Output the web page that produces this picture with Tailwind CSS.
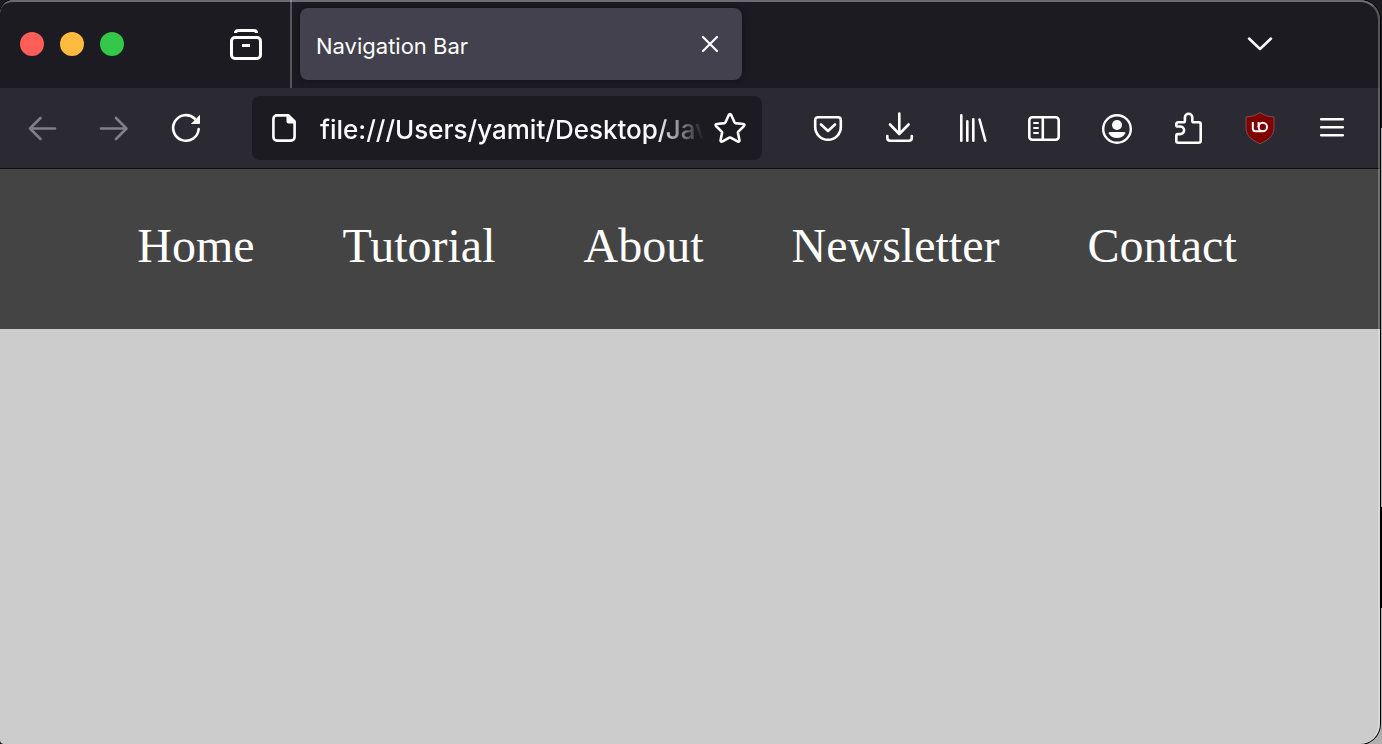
<!DOCTYPE html>
<html lang="en">
<head>
<meta charset="utf-8">
<title>Navigation Bar</title>
<script src="https://cdn.jsdelivr.net/npm/@tailwindcss/browser@4"></script>
</head>
<body class="relative min-h-screen flex bg-[#1c1b22] overflow-hidden">
  <!-- desktop showing beside the window -->
  <div class="absolute inset-y-0 right-0 w-6 flex flex-col bg-[#1c1b22]" aria-hidden="true">
    <div class="h-32 bg-[#1c1b22]"></div>
    <div class="h-[379px] bg-[#b0b0b0]"></div>
    <div class="h-[101px] bg-black"></div>
    <div class="flex-1 bg-[#b0b0b0]"></div>
  </div>

  <div class="relative flex-1 flex flex-col mr-[2px] rounded-[20px] rounded-tl-[14px] rounded-bl-[4px] overflow-hidden bg-[#cccccc] shadow-[0_0_0_1px_#000]">
    <div class="flex items-stretch h-[88px] bg-[#1c1b22] text-white">
      <div class="flex items-center gap-4 pl-5">
        <button aria-label="Close window" class="size-6 rounded-full bg-[#ff5f58]"></button>
        <button aria-label="Minimise window" class="size-6 rounded-full bg-[#ffbb3f]"></button>
        <button aria-label="Zoom window" class="size-6 rounded-full bg-[#34c84a]"></button>
      </div>
      <button aria-label="Recent browsing" class="ml-[102px] pr-6 border-r-2 border-[#56555b]">
        <svg class="size-10" viewBox="0 0 40 40" fill="none" stroke="#fff" stroke-width="3" stroke-linecap="butt">
          <rect x="5.500" y="13.500" width="29" height="21" rx="3.500"/>
          <path d="M9.500 9c0-2 1-2.500 3-2.500h15c2 0 3 .5 3 2.500"/>
          <path d="M16 21.500h8"/>
        </svg>
      </button>
      <div class="flex items-center my-2 ml-2 w-[442px] pl-4 pr-3 rounded-lg bg-[#42414d] shadow-[0_0_6px_#00000080]">
        <span class="flex-1 pt-1 font-['Inter'] text-[22px] leading-7">Navigation Bar</span>
        <button aria-label="Close tab">
          <svg class="size-10" viewBox="0 0 40 40" fill="none" stroke="#fbfbfe" stroke-width="2.200" stroke-linecap="round"><path d="M13 13l14 14M27 13L13 27"/></svg>
        </button>
      </div>
      <button aria-label="List all tabs" class="ml-auto mr-25">
        <svg class="size-10" viewBox="0 0 40 40" fill="none" stroke="#fff" stroke-width="2.500" stroke-linecap="round" stroke-linejoin="round"><path d="M9 14.500l11 10.500 11-10.500"/></svg>
      </button>
    </div>

    <div class="flex items-center h-[81px] pl-[6px] pr-3 bg-[#2b2a33] border-b border-[#0c0c0d]">
      <button aria-label="Back" class="w-[72px] shrink-0 flex justify-center" disabled>
        <svg class="size-10" viewBox="0 0 40 40" fill="none" stroke="#807f85" stroke-width="2.600" stroke-linecap="round" stroke-linejoin="round"><path d="M33 20.500H8M18.500 10L8 20.500 18.500 31"/></svg>
      </button>
      <button aria-label="Forward" class="w-[72px] shrink-0 flex justify-center" disabled>
        <svg class="size-10" viewBox="0 0 40 40" fill="none" stroke="#807f85" stroke-width="2.600" stroke-linecap="round" stroke-linejoin="round"><path d="M7 20.500h25M22 10l10.500 10.500L22 31"/></svg>
      </button>
      <button aria-label="Reload" class="w-[72px] shrink-0 flex justify-center">
        <svg class="size-10" viewBox="0 0 40 40" fill="none" stroke="#fff" stroke-width="2.600" stroke-linecap="round"><path d="M32.700 21A12.800 12.800 0 1 1 28.800 10.700"/><path d="M34 6.800v8.200q0 1-1 1h-8.200z" fill="#fff" stroke="none"/></svg>
      </button>

      <div class="flex items-center flex-1 min-w-0 h-16 mx-[30px] px-3 rounded-lg bg-[#1c1b22]">
        <svg class="size-10 shrink-0" viewBox="0 0 40 40" fill="none" stroke="#fff" stroke-width="2.600" stroke-linejoin="round"><path d="M12 7.400h12.500l6.100 6.100V29a3.600 3.600 0 0 1-3.600 3.600H13A3.600 3.600 0 0 1 9.400 29V11A3.600 3.600 0 0 1 13 7.400z"/><path d="M22.500 6.500v7q0 2 2 2h7z" fill="#fff" stroke="none"/></svg>
        <input aria-label="Address" type="text" value="file:///Users/yamit/Desktop/JavaScript" class="flex-1 w-0 min-w-0 ml-4 mr-1 pt-[2px] h-10 bg-transparent text-[#fbfbfe] font-['Inter'] font-medium text-[26px] outline-none [mask-image:linear-gradient(to_right,#000_336px,transparent_384px)]">
        <button aria-label="Bookmark this page" class="shrink-0">
          <svg class="size-10" viewBox="0 0 40 40" fill="none" stroke="#fff" stroke-width="2.600" stroke-linejoin="round"><path d="M18.700 7.200q1.300-2.400 2.600 0l3.200 7.100q.3.700 1 .8l7.500.9q2.500.4.800 2.300l-5.500 5.300q-.5.500-.4 1.200l1.500 7.100q.3 2.600-2 1.500l-6.700-3.700q-.7-.4-1.400 0l-6.700 3.700q-2.300 1.100-2-1.500l1.500-7.100q.1-.7-.4-1.200l-5.500-5.300q-1.700-1.900.8-2.300l7.500-.9q.7-.1 1-.8z"/></svg>
        </button>
      </div>

      <button aria-label="Save to Pocket" class="w-[72px] shrink-0 flex justify-center">
        <svg class="size-10" viewBox="0 0 40 40" fill="none" stroke="#fff" stroke-width="2.600" stroke-linecap="round" stroke-linejoin="round"><path d="M10 9.200h20a2.800 2.800 0 0 1 2.800 2.800v7a12.800 12.800 0 0 1-25.600 0v-7A2.800 2.800 0 0 1 10 9.200z"/><path d="M13 16.500l7 6.500 7-6.500"/></svg>
      </button>
      <button aria-label="Downloads" class="w-[72px] shrink-0 flex justify-center">
        <svg class="size-10" viewBox="0 0 40 40" fill="none" stroke="#fff" stroke-width="2.600" stroke-linecap="round" stroke-linejoin="round"><path d="M19.300 5.500v20M10 16.500l9.300 9.500 9.300-9.500M7.300 28v1.800q0 3 3 3h18.500q3 0 3-3V28"/></svg>
      </button>
      <button aria-label="Library" class="w-[72px] shrink-0 flex justify-center">
        <svg class="size-10" viewBox="0 0 40 40" fill="none" stroke="#fff" stroke-width="2.600" stroke-linecap="round"><path d="M9.300 7.300v25.400M15.300 13.300v19.400M21.300 11.300v21.400M27.500 11.500l5.800 21.200"/></svg>
      </button>
      <button aria-label="Sidebars" class="w-[72px] shrink-0 flex justify-center">
        <svg class="size-10" viewBox="0 0 40 40" fill="none" stroke="#fff" stroke-width="2.600" stroke-linecap="round"><rect x="5.300" y="9.300" width="29.400" height="22.400" rx="3"/><path d="M18.800 9.500v22"/><path d="M10 15h4M10 20h4M10 25h4" stroke-width="2"/></svg>
      </button>
      <button aria-label="Account" class="w-[72px] shrink-0 flex justify-center">
        <svg class="size-10" viewBox="0 0 40 40" fill="#fff"><circle cx="21" cy="21" r="13.800" fill="none" stroke="#fff" stroke-width="2.400"/><circle cx="21" cy="17" r="5"/><path d="M14 24h14q2 0 1.300 1.500-2.800 4.500-8.300 4.500t-8.300-4.500Q12 24 14 24z"/></svg>
      </button>
      <button aria-label="Extensions" class="w-[72px] shrink-0 flex justify-center">
        <svg class="size-10" viewBox="0 0 40 40" fill="none" stroke="#fff" stroke-width="2.600" stroke-linejoin="round"><path d="M10.100 14.300h5.200q1.600 0 1.600-1.600V9.500a3.700 3.700 0 0 1 7.400 0v3.200q0 1.600 1.600 1.600h4.800q2 0 2 2v16.400q0 2-2 2H10.300q-2 0-2-2v-5q0-1.600 1.600-1.600h2.400a3.800 3.800 0 0 0 0-7.600H9.900q-1.600 0-1.600-1.600v-.4q0-2.200 1.800-2.200z"/></svg>
      </button>
      <button aria-label="uBlock Origin" class="w-[72px] shrink-0 flex justify-center">
        <svg class="size-10" viewBox="0 0 40 40" fill="none"><path d="M20 4.500c4 3 8 4.200 14 4.500v9c0 9-3 12.500-14 17.800C9 30.500 6 27 6 18V9c6-.3 10-1.500 14-4.500z" fill="#800000" stroke="#806064" stroke-width=".8"/><path d="M12.800 14v6.500q0 2.700 2.700 2.700h6M18.600 14v5" stroke="#fff" stroke-width="2"/><circle cx="22.800" cy="19" r="4.200" stroke="#fff" stroke-width="2"/></svg>
      </button>
      <button aria-label="Open application menu" class="w-[72px] shrink-0 flex justify-center">
        <svg class="size-10" viewBox="0 0 40 40" fill="none" stroke="#fff" stroke-width="2.600" stroke-linecap="round"><path d="M9.200 11.300h21.600M9.200 19.300h21.600M9.200 27.300h21.600"/></svg>
      </button>
    </div>

    <nav class="h-40 bg-[#444444] font-['Liberation_Serif'] text-[48px] leading-[58px] text-white">
      <ul class="flex justify-center gap-[88px] pt-12 pr-[6px]">
        <li><a href="#home">Home</a></li>
        <li><a href="#tutorial">Tutorial</a></li>
        <li><a href="#about">About</a></li>
        <li><a href="#newsletter">Newsletter</a></li>
        <li><a href="#contact">Contact</a></li>
      </ul>
    </nav>
    <main class="flex-1"></main>

    <div class="absolute inset-y-0 right-0 -left-px rounded-[20px] rounded-tl-[14px] border-t-2 border-r-2 border-t-white/35 border-r-white/25 pointer-events-none" aria-hidden="true"></div>
  </div>
</body>
</html>
